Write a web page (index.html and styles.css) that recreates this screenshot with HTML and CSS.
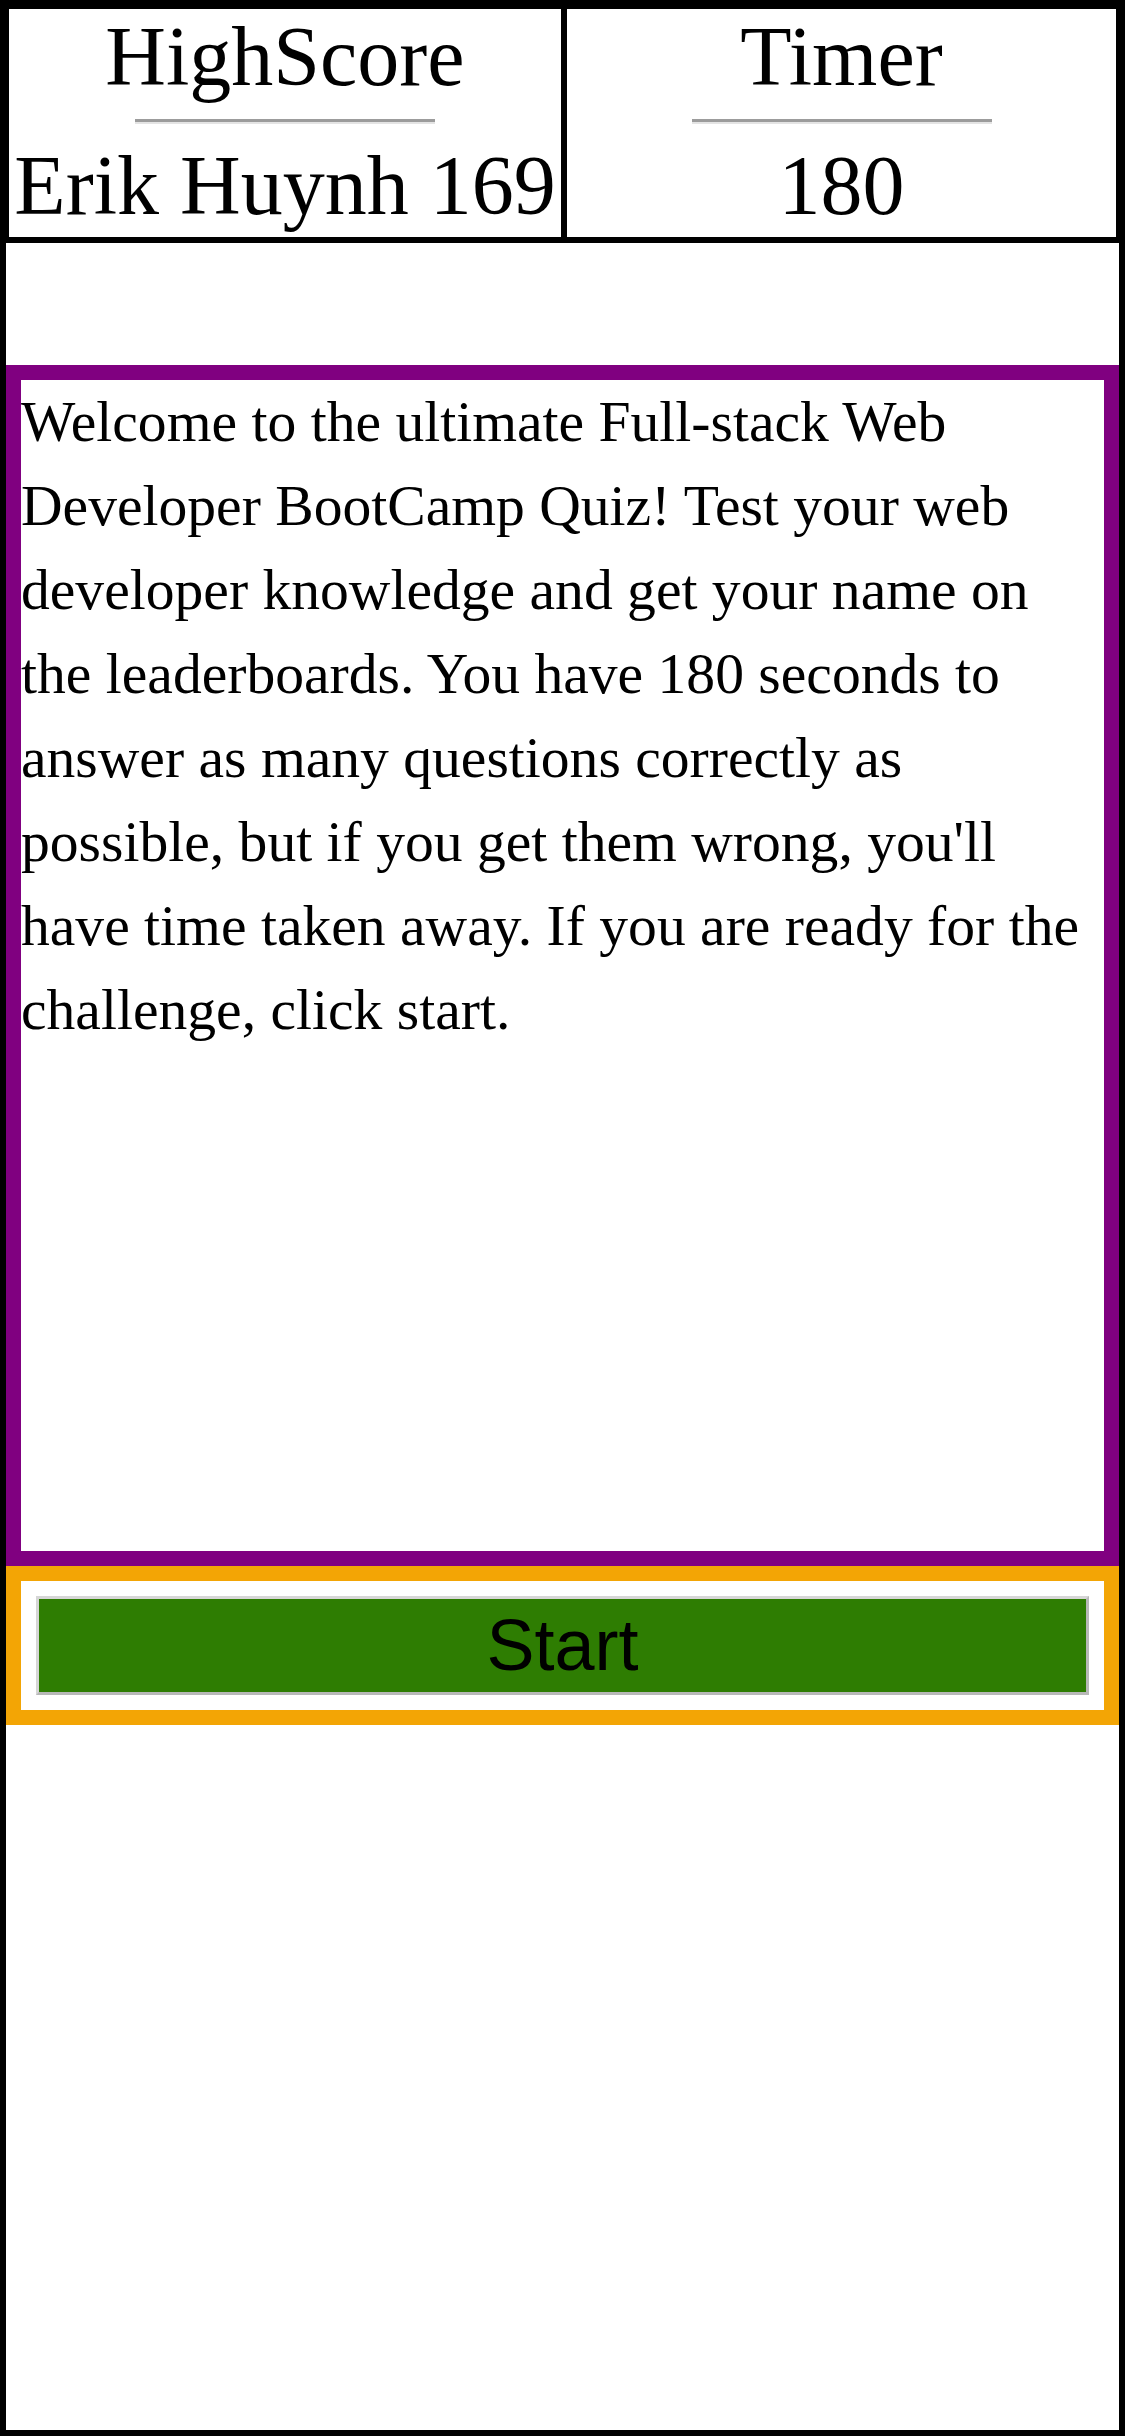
FILE: index.html
```html
<!DOCTYPE html>
<html lang="en">
<head>
<meta charset="utf-8">
<title>Quiz</title>
<link rel="stylesheet" href="styles.css">
</head>
<body>
<div class="page">
  <header class="scoreboard">
    <div class="cell cell-left">
      <div class="label">HighScore</div>
      <hr class="rule">
      <div class="value">Erik Huynh 169</div>
    </div>
    <div class="cell cell-right">
      <div class="label">Timer</div>
      <hr class="rule">
      <div class="value">180</div>
    </div>
  </header>
  <main class="quiz">
    <p class="intro">Welcome to the ultimate Full-stack Web Developer BootCamp Quiz! Test your web developer knowledge and get your name on the leaderboards. You have 180 seconds to answer as many questions correctly as possible, but if you get them wrong, you'll have time taken away. If you are ready for the challenge, click start.</p>
  </main>
  <div class="controls">
    <button class="start-btn" type="button">Start</button>
  </div>
</div>
</body>
</html>
```

FILE: styles.css
```css
* {
  box-sizing: border-box;
}

html, body {
  margin: 0;
  padding: 0;
  background: #fff;
}

.page {
  width: 1125px;
  height: 2436px;
  border: 6px solid #000;
  display: flex;
  flex-direction: column;
  font-family: "Liberation Serif", "Times New Roman", serif;
  color: #000;
}

.scoreboard {
  display: flex;
  border-bottom: 3px solid #000;
}

.cell {
  flex: 1 1 0;
  border: 3px solid #000;
  display: flex;
  flex-direction: column;
  align-items: center;
  padding: 1px 0 5px;
  min-width: 0;
}

.cell-left {
  flex-basis: 558px;
  flex-grow: 0;
}

.label,
.value {
  font-size: 84px;
  line-height: 93px;
  white-space: nowrap;
}

.rule {
  width: 300px;
  height: 0;
  margin: 16px 0 15px;
  border: 0;
  border-top: 3px solid #9c9c9c;
  border-bottom: 2px solid #e4e4e4;
}

.quiz {
  margin-top: 122px;
  height: 1201px;
  border: 15px solid #800080;
}

.intro {
  margin: 0;
  font-size: 57.6px;
  line-height: 84px;
}

.controls {
  border: 15px solid #f3a505;
  padding: 15px;
}

.start-btn {
  display: block;
  width: 100%;
  height: 99px;
  margin: 0;
  padding: 0;
  background: #2e7d02;
  border: 3px solid;
  border-color: #d6d6d6 #b8b8b8 #b8b8b8 #d6d6d6;
  color: #000;
  font-family: "Liberation Sans", Arial, sans-serif;
  font-size: 72px;
  line-height: 93px;
  text-align: center;
}
```
